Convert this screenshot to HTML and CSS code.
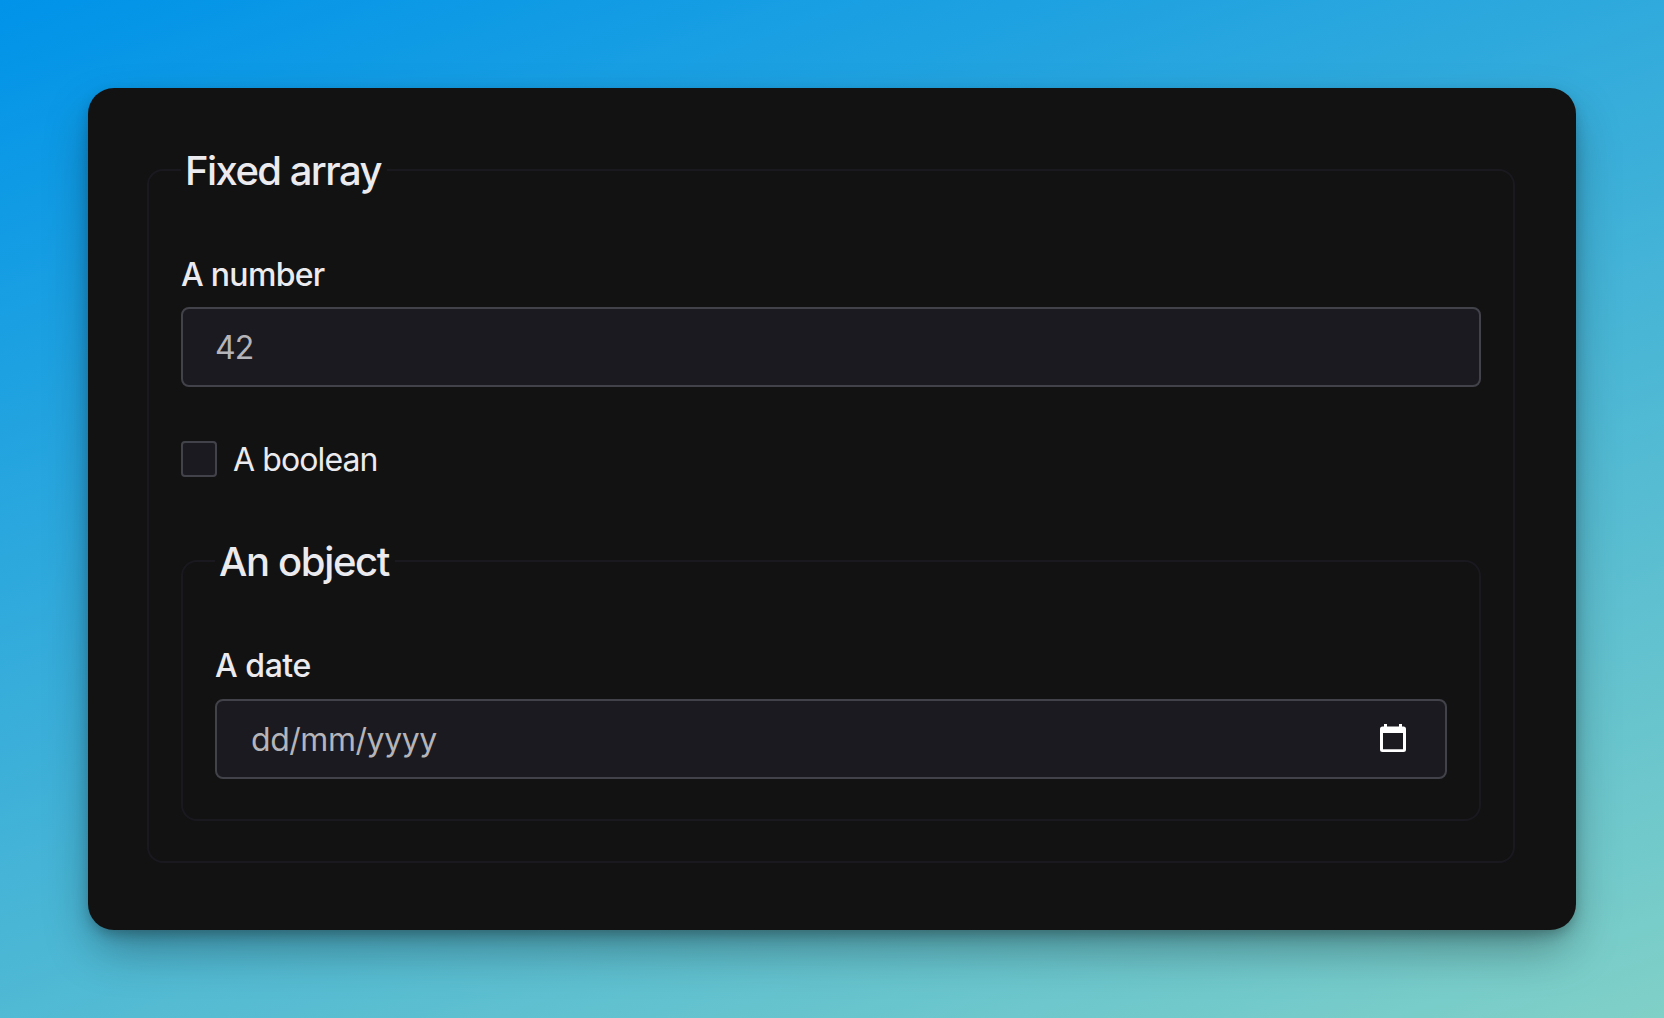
FILE: index.html
```html
<!DOCTYPE html>
<html lang="en">
<head>
<meta charset="utf-8">
<title>Fixed array</title>
<link rel="stylesheet" href="styles.css">
</head>
<body>
<form class="card">
  <fieldset class="group">
    <legend class="legend"><span class="legend-array">Fixed array</span></legend>
    <div class="field">
      <label class="label label-number" for="number">A number</label>
      <input class="input" id="number" type="text" inputmode="numeric" placeholder="42">
    </div>
    <label class="check">
      <input class="checkbox" type="checkbox">
      <span class="check-text">A boolean</span>
    </label>
    <fieldset class="group group-nested">
      <legend class="legend"><span class="legend-object">An object</span></legend>
      <div class="field field-date">
        <span class="label label-date">A date</span>
        <div class="input date">
          <span class="date-text">dd/mm/yyyy</span>
          <svg class="calendar" viewBox="0 0 26 28" width="26" height="28" aria-hidden="true">
            <path fill="#fff" fill-rule="evenodd" d="M4 0h3v2.500h12V0h3v2.500h1.500A2.500 2.500 0 0 1 26 5v20.500a2.500 2.500 0 0 1-2.500 2.500h-21A2.500 2.500 0 0 1 0 25.500V5a2.500 2.500 0 0 1 2.500-2.500H4zM3 9v16.300h20V9z"/>
          </svg>
        </div>
      </div>
    </fieldset>
  </fieldset>
</form>
</body>
</html>
```
FILE: styles.css
```css
* {
  box-sizing: border-box;
}

body {
  margin: 0;
  height: 1018px;
  padding: 88px;
  overflow: hidden;
  background: linear-gradient(160deg, #0093e9 0%, #80d0c7 100%);
  font-family: Inter, "Liberation Sans", sans-serif;
  font-size: 32px;
  color: #ebebef;
}

.card {
  height: 842px;
  padding: 58px 61px 0 59px;
  border-radius: 26px;
  background: #121212;
  box-shadow: 0 22px 48px -6px rgba(0, 0, 0, 0.36), 0 6px 14px -2px rgba(0, 0, 0, 0.26);
}

.group {
  min-width: 0;
  margin: 0;
  padding: 57px 32px 40px;
  border: 2px solid #19191f;
  border-radius: 16px;
}

.group-nested {
  margin-top: 60px;
}

.legend {
  height: 48px;
  padding: 0 6px 0 4px;
  font-size: 40px;
  font-weight: 500;
  line-height: 50px;
  white-space: nowrap;
}

.legend-array {
  letter-spacing: -1.55px;
}

.legend-object {
  letter-spacing: -1.35px;
}

.field {
  display: flex;
  flex-direction: column;
  gap: 8px;
}

.field-date {
  gap: 9px;
}

.label {
  font-weight: 500;
  line-height: 48px;
}

.label-number {
  letter-spacing: -0.7px;
}

.label-date {
  letter-spacing: -0.45px;
}

.input {
  width: 100%;
  height: 80px;
  padding: 0 32px;
  border: 2px solid #42424a;
  border-radius: 8px;
  background: #1b1a20;
  color: #b4b4b9;
  font: inherit;
  letter-spacing: -0.9px;
}

.input::placeholder {
  color: #b4b4b9;
  opacity: 1;
}

.check {
  display: flex;
  align-items: center;
  gap: 16px;
  height: 36px;
  margin-top: 54px;
}

.check-text {
  letter-spacing: -0.9px;
}

.checkbox {
  appearance: none;
  width: 36px;
  height: 36px;
  margin: 0;
  border: 2px solid #42424a;
  border-radius: 4px;
  background: #1b1a20;
}

.date {
  display: flex;
  align-items: center;
  justify-content: space-between;
  padding: 0 39px 0 34px;
  letter-spacing: -0.45px;
}

.calendar {
  margin-bottom: 2px;
}
```
